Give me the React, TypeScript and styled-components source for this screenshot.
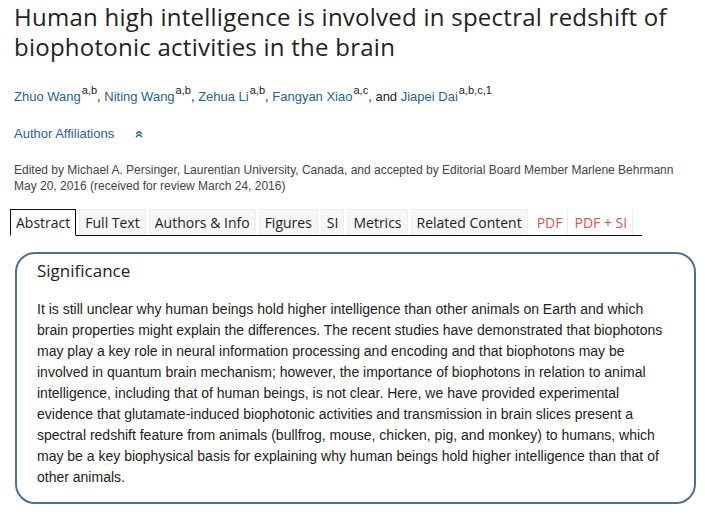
import React from "react";
import styled, { createGlobalStyle } from "styled-components";

const Global = createGlobalStyle`
  html, body { margin: 0; padding: 0; background: #fff; }
  body { font-family: "Liberation Sans", Arial, sans-serif; }
`;

const Page = styled.div`
  padding: 2px 0 0 14px;
  width: 705px;
  box-sizing: border-box;
`;

const Title = styled.h1`
  margin: 0;
  font-family: "Open Sans", sans-serif;
  font-weight: 400;
  font-size: 24px;
  letter-spacing: 0.25px;
  line-height: 30px;
  color: #222;
`;

const Authors = styled.div`
  margin-top: 26px;
  font-size: 13px;
  line-height: 18px;
  color: #222;
`;

const AuthorLink = styled.a`
  color: #2b5f97;
  text-decoration: none;
`;

const Sup = styled.sup`
  font-size: 11px;
  line-height: 0;
  vertical-align: 7px;
  margin-left: 1px;
`;

const Affil = styled.div`
  margin-top: 19px;
  display: flex;
  align-items: center;
  gap: 21px;
  font-size: 13px;
  line-height: 18px;
  color: #2b5f97;
`;

const Edited = styled.div`
  margin-top: 19px;
  font-size: 12px;
  line-height: 16px;
  color: #444;
`;

const Tabs = styled.div`
  margin-top: 15px;
  display: flex;
  align-items: flex-end;
  margin-left: -4px;
  width: 632px;
  border-bottom: 1px solid #111;
`;

const Tab = styled.div<{ $active?: boolean; $pdf?: boolean }>`
  font-family: "Open Sans", sans-serif;
  font-size: 14px;
  line-height: 20px;
  padding: 3px 5px 2px;
  margin-right: 3px;
  margin-bottom: ${(p) => (p.$active ? "-1px" : "0")};
  color: ${(p) => (p.$pdf ? "#d9534f" : "#222")};
  background: ${(p) => (p.$active ? "#fff" : p.$pdf ? "#fff" : "#f6f6f6")};
  border: 1px solid ${(p) => (p.$active ? "#111" : p.$pdf ? "transparent" : "#eee")};
  border-bottom: ${(p) => (p.$active ? "1px solid #fff" : "none")};
  ${(p) => (p.$pdf ? "border-right: 1px solid #eee; margin-right: 0;" : "")}
`;

const Box = styled.section`
  margin: 16px 0 0 1px;
  width: 681px;
  box-sizing: border-box;
  border: 2px solid #4d7092;
  border-radius: 20px;
  padding: 5px 20px 14px 20px;
`;

const BoxTitle = styled.h2`
  margin: 0;
  font-family: "Open Sans", sans-serif;
  font-weight: 400;
  font-size: 17px;
  line-height: 24px;
  color: #222;
`;

const BoxText = styled.p`
  margin: 16px 0 0;
  font-size: 14px;
  line-height: 21px;
  color: #222;
`;

const Chevrons = () => (
  <svg width="8" height="8" viewBox="0 0 8 8" fill="none" stroke="#2b5f97" strokeWidth="1.6">
    <path d="M1 4 L4 1.5 L7 4" />
    <path d="M1 7 L4 4.5 L7 7" />
  </svg>
);

const tabs = [
  { label: "Abstract", active: true },
  { label: "Full Text" },
  { label: "Authors & Info" },
  { label: "Figures" },
  { label: "SI" },
  { label: "Metrics" },
  { label: "Related Content" },
  { label: "PDF", pdf: true },
  { label: "PDF + SI", pdf: true },
];

export default function App() {
  return (
    <>
      <Global />
      <Page>
        <Title>
          Human high intelligence is involved in spectral redshift of biophotonic activities in the brain
        </Title>
        <Authors>
          <AuthorLink>Zhuo Wang</AuthorLink>
          <Sup>a,b</Sup>, <AuthorLink>Niting Wang</AuthorLink>
          <Sup>a,b</Sup>, <AuthorLink>Zehua Li</AuthorLink>
          <Sup>a,b</Sup>, <AuthorLink>Fangyan Xiao</AuthorLink>
          <Sup>a,c</Sup>, and <AuthorLink>Jiapei Dai</AuthorLink>
          <Sup>a,b,c,1</Sup>
        </Authors>
        <Affil>
          <span>Author Affiliations</span>
          <Chevrons />
        </Affil>
        <Edited>
          Edited by Michael A. Persinger, Laurentian University, Canada, and accepted by Editorial Board Member Marlene Behrmann
          <br />
          May 20, 2016 (received for review March 24, 2016)
        </Edited>
        <Tabs>
          {tabs.map((t) => (
            <Tab key={t.label} $active={t.active} $pdf={t.pdf}>
              {t.label}
            </Tab>
          ))}
        </Tabs>
        <Box>
          <BoxTitle>Significance</BoxTitle>
          <BoxText>
            It is still unclear why human beings hold higher intelligence than other animals on Earth and which brain properties might explain the differences. The recent studies have demonstrated that biophotons may play a key role in neural information processing and encoding and that biophotons may be involved in quantum brain mechanism; however, the importance of biophotons in relation to animal intelligence, including that of human beings, is not clear. Here, we have provided experimental evidence that glutamate-induced biophotonic activities and transmission in brain slices present a spectral redshift feature from animals (bullfrog, mouse, chicken, pig, and monkey) to humans, which may be a key biophysical basis for explaining why human beings hold higher intelligence than that of other animals.
          </BoxText>
        </Box>
      </Page>
    </>
  );
}
